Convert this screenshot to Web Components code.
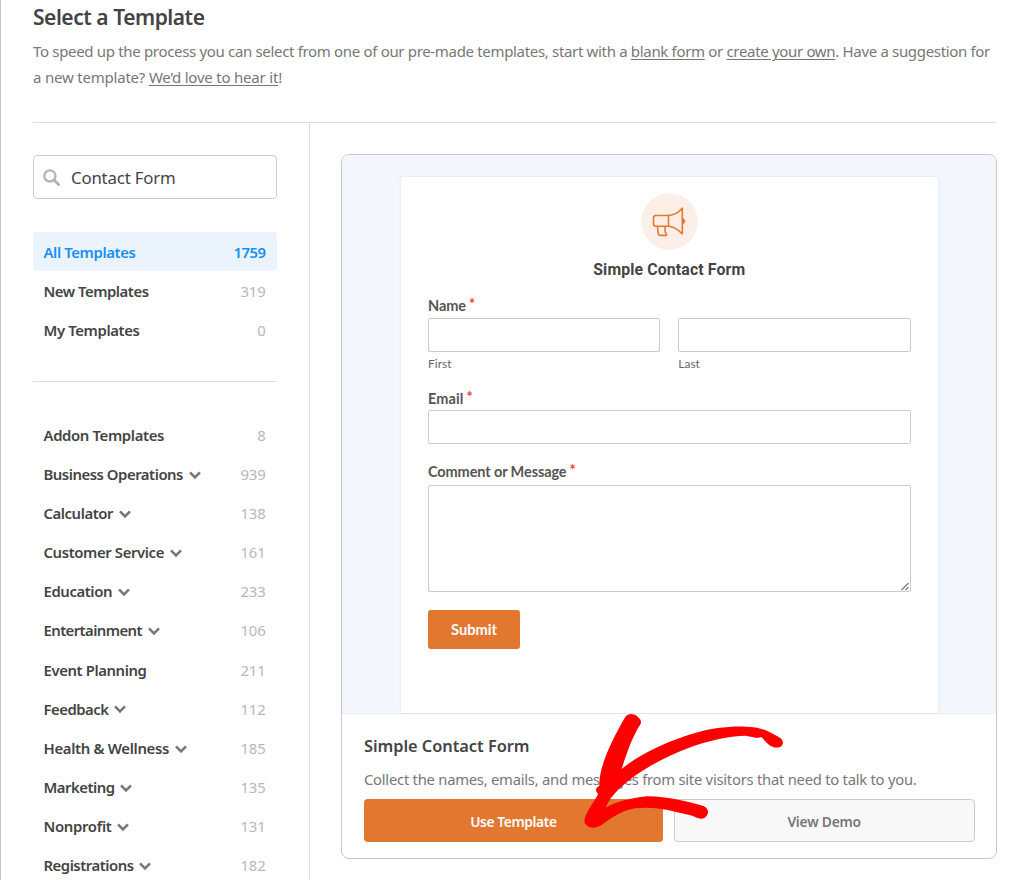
<!DOCTYPE html>
<html lang="en">
<head>
<meta charset="utf-8">
<title>Select a Template</title>
<style>
html,body{margin:0;padding:0;background:#fff}
body{width:1024px;height:880px;overflow:hidden;font-family:"Noto Sans","Open Sans",sans-serif;color:#444}
</style>
</head>
<body>
<template-page></template-page>
<script>
const define = (name, html, ready) => customElements.define(name, class extends HTMLElement {
  connectedCallback() {
    if (this.shadowRoot) return;
    this.attachShadow({mode: 'open'}).innerHTML = typeof html === 'function' ? html(this) : html;
    if (ready) ready(this, this.shadowRoot);
  }
});

/* A single line of text tracked to a given measure. */
define('fit-text', `<style>:host{display:inline-block;white-space:nowrap;vertical-align:top}span{display:inline-block}</style><span><slot></slot></span>`,
  (el, root) => {
    const span = root.querySelector('span');
    const natural = span.getBoundingClientRect().width;
    const n = el.textContent.length;
    if (el.hasAttribute('w')) span.style.letterSpacing = ((+el.getAttribute('w') - natural) / n) + 'px';
  });

define('page-header', `<style>
:host{display:block;height:121px;padding-top:1px;margin:0 28px 0 32px;border-bottom:1px solid #ddd}
h1{margin:0 0 5px;font-size:21px;line-height:32px;height:32px;font-weight:600;color:#444}
p{margin:0;font-size:15px;line-height:26px;color:#777}
p fit-text{display:block}
a{color:#777;text-decoration:underline;text-decoration-thickness:1px;text-underline-offset:2px}
</style>
<h1><fit-text w="171.5">Select a Template</fit-text></h1>
<p><fit-text w="957">To speed up the process you can select from one of our pre-made templates, start with a <a>blank form</a> or <a>create your own</a>. Have a suggestion for</fit-text>
<fit-text w="249">a new template? <a>We’d love to hear it</a>!</fit-text></p>`);

define('search-box', el => `<style>
:host{display:flex;align-items:center;box-sizing:border-box;height:44px;border:1px solid #ccc;border-radius:4px;padding-left:9px;gap:11px;font-size:16.8px;color:#444;line-height:44px}
svg{flex:none}
fit-text{margin-top:2px}
</style>
<svg width="17" height="17" viewBox="0 0 17 17" fill="none" stroke="#b4b4b4"><circle cx="6.9" cy="6.9" r="5.6" stroke-width="2.3"/><path d="M11 11l4.6 4.6" stroke-width="2.8" stroke-linecap="round"/></svg>
<fit-text w="104.5">${el.getAttribute('value')}</fit-text>`);

define('menu-item', el => `<style>
:host{display:flex;align-items:center;box-sizing:border-box;height:38.5px;padding:0 11.500px 0 10.500px;border-radius:4px;font-size:14.900px;line-height:38.5px;font-weight:600;color:#444}
:host([active]){background:#ebf3fc;color:#1790f3}
svg{margin:1.500px 0 0 5.500px}
.n{margin-left:auto;font-weight:400;color:#b8b8b8}
:host([active]) .n{color:inherit;font-weight:600}
fit-text{position:relative;top:var(--nudge,0)}
</style>
<fit-text w="${el.getAttribute('w')}">${el.getAttribute('label').replace('&', '&amp;')}</fit-text>
${el.hasAttribute('more') ? '<svg width="12" height="9" viewBox="0 0 12 9" fill="none" stroke="#777" stroke-width="2.5"><path d="M1 1.4L6 6.5L11 1.4"/></svg>' : ''}
<fit-text class="n" w="${el.getAttribute('count').length * (el.hasAttribute('active') ? 8 : 8.35)}">${el.getAttribute('count')}</fit-text>`);

define('template-sidebar', `<style>
:host{display:block;box-sizing:border-box;width:277px;padding:32px 0 0 33px;flex:none}
nav{display:flex;flex-direction:column;gap:.65px}
nav.a{margin-top:33px;height:149px;border-bottom:1px solid #ddd;--nudge:.6px}
nav.b{margin-top:34px;--nudge:-.3px}
</style>
<search-box value="Contact Form"></search-box>
<nav class="a">
<menu-item active label="All Templates" w="92" count="1759"></menu-item>
<menu-item label="New Templates" w="105" count="319"></menu-item>
<menu-item label="My Templates" w="96" count="0"></menu-item>
</nav>
<nav class="b">
<menu-item label="Addon Templates" w="120.5" count="8"></menu-item>
<menu-item label="Business Operations" w="139.5" count="939" more></menu-item>
<menu-item label="Calculator" w="69.5" count="138" more></menu-item>
<menu-item label="Customer Service" w="120.5" count="161" more></menu-item>
<menu-item label="Education" w="68.5" count="233" more></menu-item>
<menu-item label="Entertainment" w="98.5" count="106" more></menu-item>
<menu-item label="Event Planning" w="103" count="211"></menu-item>
<menu-item label="Feedback" w="65" count="112" more></menu-item>
<menu-item label="Health &amp; Wellness" w="125.5" count="185" more></menu-item>
<menu-item label="Marketing" w="71" count="135" more></menu-item>
<menu-item label="Nonprofit" w="68" count="131" more></menu-item>
<menu-item label="Registrations" w="90" count="182" more></menu-item>
</nav>`);

define('field-label', `<style>:host{display:block;font:700 14.500px/20px Lato,sans-serif;color:#555;position:relative;top:1px}i{font-style:normal;color:#f33;position:relative;top:-2px;margin-left:3px}</style><slot></slot><i>*</i>`);

define('form-preview', `<style>
:host{display:block;box-sizing:border-box;width:537px;height:536px;background:#fff;padding:15px 27.500px 0 27px;border-radius:3px 3px 0 0;box-shadow:0 0 3px rgba(80,110,140,.14);font-family:Lato,sans-serif}
.icon{display:block;margin:0 auto;position:relative;top:.5px}
h2{margin:10px 0 0;text-align:center;font:700 15.800px/22px Roboto,sans-serif;color:#444}
field-label.name{margin-top:14px}
.row{display:flex;gap:18px}
.row>div{flex:1}
.box{box-sizing:border-box;height:34px;border:1px solid #ccc;border-radius:2px;background:#fff}
small{display:block;font-size:12px;line-height:16px;margin-top:4px;color:#666}
.area{height:107px;display:flex;align-items:flex-end;justify-content:flex-end}
.btn{width:92px;height:39px;margin-top:18px;background:#e27730;border-radius:3px;color:#fff;text-align:center;font:700 14.700px/39px Lato,sans-serif;}
</style>
<svg class="icon" width="57" height="57" viewBox="0 0 57 57" fill="none" stroke="#e8772e" stroke-width="1.6" stroke-linejoin="round" stroke-linecap="round"><circle cx="28.5" cy="28.5" r="28.3" fill="#fcefe7" stroke="none"/><path d="M15 22.5h12.5v10.8H15q-2.5 0-2.5-2.5V25q0-2.5 2.5-2.5z"/><path d="M27.5 22.5C34 22 38 19 41.3 15.2V41C38 37.3 34 34 27.5 33.3"/><path d="M16.6 33.5c0 5 .2 6.500 1.500 8.900h7.400c.5-1.800-1.400-2-1.400-4.500v-4.400"/><path d="M42 25.500c2.600.8 2.600 4.500 0 5.300z" fill="#e8772e" stroke-width=".8"/></svg>
<h2><fit-text w="152">Simple Contact Form</fit-text></h2>
<field-label class="name"><fit-text w="38">Name</fit-text></field-label>
<div class="row" style="margin-top:3px"><div><div class="box"></div><small>First</small></div><div><div class="box"></div><small>Last</small></div></div>
<field-label style="margin-top:16px"><fit-text w="35.500">Email</fit-text></field-label>
<div class="box" style="margin-top:2px"></div>
<field-label style="margin-top:17px"><fit-text w="138.500">Comment or Message</fit-text></field-label>
<div class="box area" style="margin-top:4px"><svg width="9" height="9" viewBox="0 0 9 9" stroke="#777" stroke-width="1.100"><path d="M.5 8L7.500 1M4.500 8L7.500 5"/></svg></div>
<div class="btn"><fit-text w="46">Submit</fit-text></div>`);

define('action-button', `<style>
:host{display:block;box-sizing:border-box;flex:1;height:43px;border-radius:4px;text-align:center;font-size:13.800px;line-height:45px;font-weight:600;background:#e27730;color:#fff}
:host([plain]){background:#f8f8f8;border:1px solid #ccc;color:#777;line-height:43px}
</style><slot></slot>`);

define('pointer-arrow', `<style>:host{position:absolute;left:560px;top:700px;pointer-events:none}svg{display:block}</style>
<svg width="240" height="150" viewBox="0 0 720 450"><path fill="#f00" d="M194 54C201 40 221 38 233 50C246 61 245 69 238 78C219 108 200 158 185 207C235 165 315 126 405 99C455 84 510 78 557 80C598 80 625 92 657 112C672 119 672 136 660 141C638 148 622 132 605 111C592 117 578 110 557 107C460 109 340 154 255 208C196 244 151 286 137 323C164 307 211 294 261 289C327 290 381 304 431 318C448 326 448 345 433 354C416 362 404 346 378 343C328 331 285 319 226 325C180 332 152 357 126 374C105 387 84 387 74 369C69 350 94 318 111 289L114 281C105 273 106 263 118 257C116 207 149 132 194 54Z"/></svg>`);

define('template-card', `<style>
:host{display:block;box-sizing:border-box;width:656px;height:705px;margin:31px 0 0 31px;border-radius:8px;overflow:hidden;border:1px solid #c6c8ca;background:#fff}
.top{box-sizing:border-box;height:559px;background:#f3f7fc;border-bottom:1px solid #e6edf3;padding:22px 0 0 59px}
.info{padding:18px 21.500px 0 22px}
h3{margin:0;font-size:16.400px;line-height:28px;font-weight:600;color:#444}
p{margin:5px 0 0;font-size:14.800px;line-height:28px;color:#777}
.buttons{display:flex;gap:11px;margin-top:6px}
</style>
<div class="top"><form-preview></form-preview></div>
<div class="info"><h3><fit-text w="165.500">Simple Contact Form</fit-text></h3>
<p><fit-text w="552.500">Collect the names, emails, and messages from site visitors that need to talk to you.</fit-text></p>
<div class="buttons"><action-button><fit-text w="86.500">Use Template</fit-text></action-button><action-button plain><fit-text w="73.500">View Demo</fit-text></action-button></div></div>`);

define('template-page', `<style>
:host{display:block;box-sizing:border-box;position:relative;width:1024px;height:880px;overflow:hidden;border-left:1px solid #c3c4c7}
main{display:flex;margin-left:-1px}
.col{border-left:1px solid #ddd;margin-left:32px;height:757px}
page-header+main{margin-top:0}
</style>
<page-header></page-header>
<main><template-sidebar></template-sidebar><div class="col"><template-card></template-card></div></main>
<pointer-arrow style="margin-left:-1px"></pointer-arrow>`);
</script>
</body>
</html>
